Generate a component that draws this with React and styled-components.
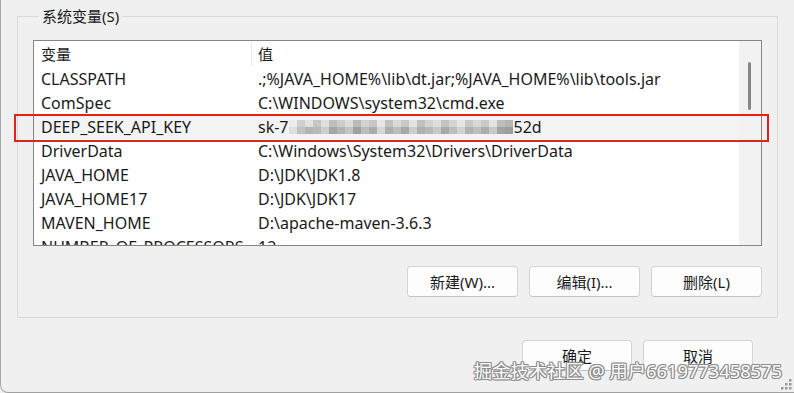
import React from 'react';
import styled, { createGlobalStyle } from 'styled-components';

const Global = createGlobalStyle`
  html, body { margin: 0; padding: 0; background: #f0f0f0; }
  body { font-family: "Noto Sans", "Noto Sans CJK SC", sans-serif; color: #1a1a1a; }
  * { box-sizing: border-box; }
`;

const Window = styled.div`
  position: relative;
  width: 794px;
  height: 393px;
  background: #f0f0f0;
  border-left: 1px solid #a8a8a8;
  border-bottom: 1px solid #a0a0a0;
  border-bottom-left-radius: 8px;
  overflow: hidden;
  padding: 6px 16px 0 16px;
  display: flex;
  flex-direction: column;
`;

const Group = styled.fieldset`
  margin: 0;
  padding: 14px 15px 20px 15px;
  border: 1px solid #dadada;
  min-width: 0;
  display: flex;
  flex-direction: column;
`;

const Legend = styled.legend`
  margin-left: 6px;
  padding: 0 3px;
  font-size: 15px;
  line-height: 20px;
`;

const ListBox = styled.div`
  height: 206px;
  border: 1px solid #858585;
  background: #fff;
  display: flex;
  overflow: hidden;
`;

const Table = styled.div`
  flex: 1;
  display: flex;
  flex-direction: column;
  min-width: 0;
`;

const Row = styled.div`
  display: grid;
  grid-template-columns: 217px 1fr;
  height: ${p => (p.$header ? 26 : 24)}px;
  line-height: ${p => (p.$header ? 26 : 24)}px;
  font-size: ${p => (p.$header ? 15 : 16)}px;
  white-space: nowrap;
  background: ${p => (p.$selected ? '#f3f3f3' : 'transparent')};
  flex-shrink: 0;
`;

const Cell = styled.div`
  padding-left: ${p => (p.$divider ? 6 : 7)}px;
  overflow: hidden;
  display: flex;
  align-items: center;
  ${p => p.$divider && 'border-left: 1px solid #e6e6e6;'}
`;

const HeaderCell = styled(Cell)`
  height: 24px;
  margin-top: 1px;
`;

const ValueCell = styled(Cell)`
  padding-left: 7px;
`;

const Scroll = styled.div`
  width: 22px;
  background: #f2f2f2;
  display: flex;
  justify-content: center;
  padding: 21px 1px 0 0;
`;

const Thumb = styled.div`
  width: 3px;
  height: 48px;
  border-radius: 2px;
  background: #878787;
`;

const Mosaic = styled.span`
  display: inline-flex;
  height: 14px;
  margin: 0 1px 0 0;
`;

const Tile = styled.span`
  display: flex;
  flex-direction: column;
  width: ${p => p.$w}px;
`;

const TileHalf = styled.span`
  flex: 1;
  background: ${p => p.$c};
`;

const ButtonRow = styled.div`
  display: flex;
  justify-content: flex-end;
  gap: 11px;
  margin-top: 20px;
  padding-right: ${p => p.$pr || 0}px;
`;

const Button = styled.button`
  width: ${p => p.$w || 110}px;
  height: 31px;
  background: #fdfdfd;
  border: 1px solid #d3d3d3;
  border-bottom-color: #c4c4c4;
  border-radius: 4px;
  font-family: "Noto Sans", "Noto Sans CJK SC", sans-serif;
  font-size: 15px;
  color: #1a1a1a;
  padding: 0;
`;

const BottomRow = styled(ButtonRow)`
  margin-top: 22px;
`;

const Highlight = styled.div`
  position: absolute;
  left: 13px;
  top: 114px;
  width: 755px;
  height: 28px;
  border: 2px solid #e2231a;
  pointer-events: none;
`;

const Watermark = styled.div`
  position: absolute;
  right: 12px;
  bottom: 9px;
  font-size: 18.3px;
  line-height: 24px;
  color: #ffffff;
  white-space: nowrap;
  text-shadow: 1px 0 0 #8a8a8a, -1px 0 0 #8a8a8a, 0 1px 0 #8a8a8a, 0 -1px 0 #8a8a8a,
    1px 1px 0 #9a9a9a, -1px -1px 0 #9a9a9a, 1px -1px 0 #9a9a9a, -1px 1px 0 #9a9a9a;
`;

const Grip = styled.svg`
  position: absolute;
  right: 2px;
  bottom: 2px;
`;

const rows = [
  ['CLASSPATH', '.;%JAVA_HOME%\\lib\\dt.jar;%JAVA_HOME%\\lib\\tools.jar'],
  ['ComSpec', 'C:\\WINDOWS\\system32\\cmd.exe'],
  ['DEEP_SEEK_API_KEY', null],
  ['DriverData', 'C:\\Windows\\System32\\Drivers\\DriverData'],
  ['JAVA_HOME', 'D:\\JDK\\JDK1.8'],
  ['JAVA_HOME17', 'D:\\JDK\\JDK17'],
  ['MAVEN_HOME', 'D:\\apache-maven-3.6.3'],
  ['NUMBER_OF_PROCESSORS', '12'],
];

const tiles = [
  [8, '#ececec', '#dedede'], [8, '#cfcfcf', '#c2c2c2'], [8, '#e2e2e2', '#b4b4b4'],
  [8, '#c6c6c6', '#b9b9b9'], [8, '#e0e0e0', '#cdcdcd'], [8, '#bebebe', '#a6a6a6'],
  [8, '#cccccc', '#b3b3b3'], [8, '#dcdcdc', '#c4c4c4'], [8, '#bababa', '#a0a0a0'],
  [8, '#d2d2d2', '#bdbdbd'], [8, '#c6c6c6', '#ababab'], [8, '#e6e6e6', '#d6d6d6'],
  [8, '#c2c2c2', '#aeaeae'], [8, '#d8d8d8', '#bcbcbc'], [8, '#c8c8c8', '#a8a8a8'],
  [8, '#e3e3e3', '#cccccc'], [8, '#c0c0c0', '#b0b0b0'], [8, '#d3d3d3', '#b8b8b8'],
  [8, '#dedede', '#c8c8c8'], [8, '#c3c3c3', '#a9a9a9'], [8, '#d4d4d4', '#bdbdbd'],
  [8, '#e6e6e6', '#d2d2d2'], [8, '#c9c9c9', '#b2b2b2'], [8, '#d7d7d7', '#bfbfbf'],
  [8, '#cacaca', '#acacac'], [8, '#e2e2e2', '#c9c9c9'], [8, '#bdbdbd', '#a3a3a3'],
  [8, '#b5b5b5', '#9e9e9e'],
];

export default function App() {
  return (
    <>
      <Global />
      <Window>
        <Group>
          <Legend>系统变量(S)</Legend>
          <ListBox>
            <Table>
              <Row $header>
                <HeaderCell>变量</HeaderCell>
                <HeaderCell $divider>值</HeaderCell>
              </Row>
              {rows.map(([k, v]) => (
                <Row key={k} $selected={v === null}>
                  <Cell>{k}</Cell>
                  <ValueCell>
                    {v === null ? (
                      <>
                        sk-7
                        <Mosaic>
                          {tiles.map(([w, a, b], i) => (
                            <Tile key={i} $w={w}>
                              <TileHalf $c={a} />
                              <TileHalf $c={b} />
                            </Tile>
                          ))}
                        </Mosaic>
                        52d
                      </>
                    ) : (
                      v
                    )}
                  </ValueCell>
                </Row>
              ))}
            </Table>
            <Scroll>
              <Thumb />
            </Scroll>
          </ListBox>
          <ButtonRow>
            <Button $w={111}>新建(W)...</Button>
            <Button $w={111}>编辑(I)...</Button>
            <Button $w={111}>删除(L)</Button>
          </ButtonRow>
        </Group>
        <BottomRow $pr={25}>
          <Button>确定</Button>
          <Button>取消</Button>
        </BottomRow>
        <Highlight />
        <Watermark>掘金技术社区 @ 用户6619773458575</Watermark>
        <Grip width="11" height="11" viewBox="0 0 11 11">
          {[[8, 0], [8, 4], [4, 4], [8, 8], [4, 8], [0, 8]].map(([x, y], i) => (
            <rect key={i} x={x} y={y} width="2.5" height="2.5" fill="#9a9a9a" />
          ))}
        </Grip>
      </Window>
    </>
  );
}
